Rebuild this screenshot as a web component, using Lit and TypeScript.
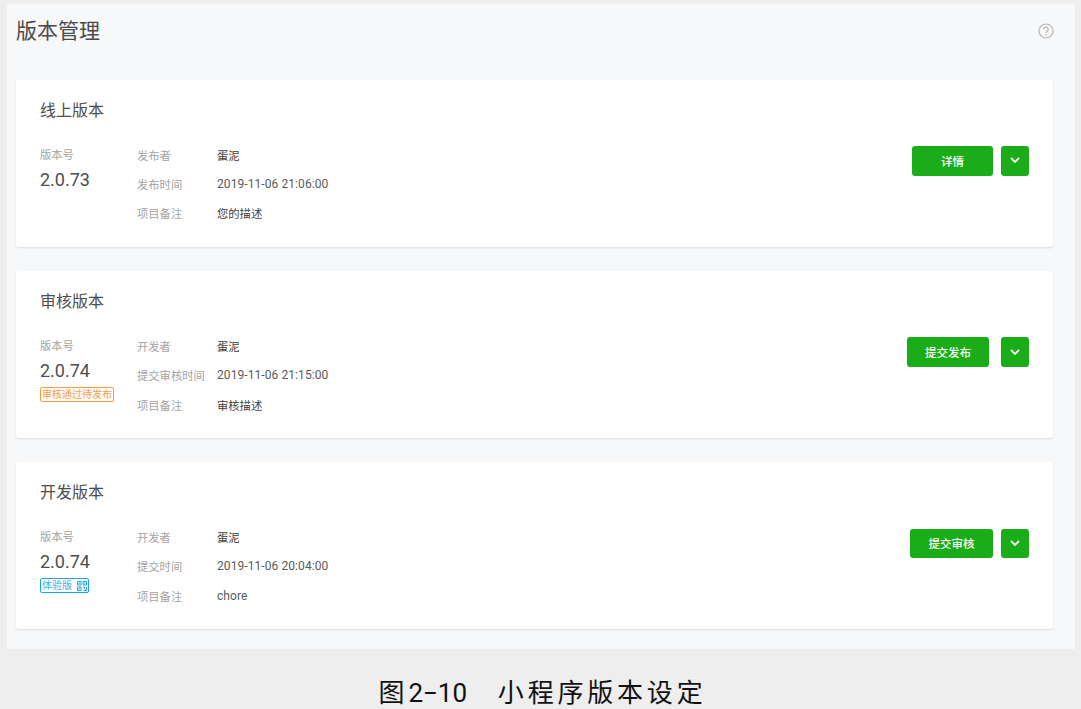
import { LitElement, css, html, nothing } from 'lit';
import { customElement } from 'lit/decorators.js';

interface VersionCard {
  title: string;
  version: string;
  rows: [string, string][];
  action: string;
  actionClass: string;
  tag?: 'audit' | 'trial';
}

const CARDS: VersionCard[] = [
  {
    title: '线上版本',
    version: '2.0.73',
    rows: [
      ['发布者', '蛋泥'],
      ['发布时间', '2019-11-06 21:06:00'],
      ['项目备注', '您的描述'],
    ],
    action: '详情',
    actionClass: 'online',
  },
  {
    title: '审核版本',
    version: '2.0.74',
    rows: [
      ['开发者', '蛋泥'],
      ['提交审核时间', '2019-11-06 21:15:00'],
      ['项目备注', '审核描述'],
    ],
    action: '提交发布',
    actionClass: 'audit',
    tag: 'audit',
  },
  {
    title: '开发版本',
    version: '2.0.74',
    rows: [
      ['开发者', '蛋泥'],
      ['提交时间', '2019-11-06 20:04:00'],
      ['项目备注', 'chore'],
    ],
    action: '提交审核',
    actionClass: 'dev',
    tag: 'trial',
  },
];

const isLatin = (text: string) => /^[\x00-\x7f]+$/.test(text);

@customElement('app-root')
export class AppRoot extends LitElement {
  static styles = css`
    :host {
      display: block;
      box-sizing: border-box;
      width: 1081px;
      height: 709px;
      padding-top: 4px;
      overflow: hidden;
      background: #eeeeee;
      font-family: Roboto, 'Noto Sans CJK SC', sans-serif;
      color: #353535;
    }
    .panel {
      box-sizing: border-box;
      width: 1068px;
      height: 645px;
      margin-left: 7px;
      padding: 0 22px 0 9px;
      background: #f7f8fa;
    }
    .head {
      display: flex;
      align-items: center;
      justify-content: space-between;
      height: 76px;
      padding-bottom: 22px;
      box-sizing: border-box;
    }
    .head h1 {
      margin: 0;
      font-size: 21px;
      font-weight: 400;
      line-height: 54px;
      color: #4a4a4a;
    }
    .help {
      width: 16px;
      height: 16px;
      margin-right: -1px;
      display: block;
    }
    .card {
      box-sizing: border-box;
      height: 166.6px;
      margin-bottom: 24.6px;
      padding: 20px 24px 0;
      background: #fff;
      border-radius: 3px;
      box-shadow: 0 1px 2px rgba(0, 0, 0, 0.12);
    }
    .card h2 {
      margin: 0 0 20px;
      font-size: 16px;
      font-weight: 400;
      line-height: 21px;
      color: #4d4d4d;
    }
    .body {
      display: flex;
      align-items: flex-start;
    }
    .version {
      width: 97px;
      flex: none;
    }
    .label {
      font-size: 11.3px;
      line-height: 29px;
      color: #a3a3a3;
    }
    .number {
      font-size: 18px;
      line-height: 22px;
      margin-top: -1px;
      color: #4d4d4d;
    }
    .tag {
      display: inline-flex;
      align-items: center;
      box-sizing: border-box;
      height: 15px;
      margin-top: 5px;
      padding: 0 1px;
      border: 1px solid;
      border-radius: 2px;
      font-size: 10px;
      line-height: 13px;
    }
    .tag.audit {
      color: #f79b43;
      border-color: #f79b43;
    }
    .tag.trial {
      color: #3cb4e8;
      border-color: #1ea5e6;
    }
    .tag svg {
      width: 10px;
      height: 10px;
      margin-left: 5px;
      display: block;
    }
    .rows {
      flex: 1;
      display: grid;
      grid-template-columns: 80px 1fr;
      grid-auto-rows: 29.25px;
      align-items: center;
      margin-top: -0.8px;
      font-size: 11.3px;
    }
    .rows .key {
      color: #a3a3a3;
    }
    .rows .val {
      color: #3d3d3d;
    }
    .rows .val.latin {
      font-size: 12px;
      letter-spacing: 0.08px;
      color: #5a5a5a;
    }
    .actions {
      display: flex;
      margin-top: 5.2px;
    }
    button {
      height: 29.4px;
      padding: 0;
      border: 0;
      border-radius: 3px;
      background: #1aad19;
      color: #fff;
      font: inherit;
      font-size: 11.5px;
      font-weight: 500;
    }
    .main {
      width: 82px;
      margin-right: 8px;
    }
    .main.online {
      width: 81px;
    }
    .main.dev {
      width: 83px;
    }
    .main.audit {
      margin-right: 12px;
    }
    .more {
      width: 28px;
      display: flex;
      align-items: center;
      justify-content: center;
    }
    .more svg {
      width: 10px;
      height: 7px;
      display: block;
    }
    .caption {
      height: 60px;
      box-sizing: border-box;
      padding: 27px 0 0 4px;
      font-size: 26px;
      line-height: 34px;
      letter-spacing: 3.8px;
      color: #111;
      text-align: center;
      white-space: pre;
    }
    .caption .fig {
      letter-spacing: 0;
    }
  `;

  private renderTag(tag: VersionCard['tag']) {
    if (tag === 'audit') return html`<div class="tag audit">审核通过待发布</div>`;
    if (tag === 'trial') {
      return html`<div class="tag trial">
        体验版
        <svg viewBox="0 0 10 10" fill="none" stroke="#1ea5e6" stroke-width="1">
          <path d="M.5.5h3.5v3.5h-3.5zM6 .5h3.5v3.5h-3.5zM.5 6h3.5v3.5h-3.5zM6 6h1.5v1.5M9.5 6v3.5h-3" />
          <path d="M1.5 2.2h1.5M7 2.2h1.5M1.5 7.7h1.5M8 7.5v.8" />
        </svg>
      </div>`;
    }
    return nothing;
  }

  private renderCard(card: VersionCard) {
    return html`
      <section class="card">
        <h2>${card.title}</h2>
        <div class="body">
          <div class="version">
            <div class="label">版本号</div>
            <div class="number">${card.version}</div>
            ${this.renderTag(card.tag)}
          </div>
          <div class="rows">
            ${card.rows.map(
              ([key, val]) =>
                html`<div class="key">${key}</div>
                  <div class="val ${isLatin(val) ? 'latin' : ''}">${val}</div>`
            )}
          </div>
          <div class="actions">
            <button class="main ${card.actionClass}">${card.action}</button>
            <button class="more">
              <svg viewBox="0 0 10 7" fill="none" stroke="#fff" stroke-width="1.8">
                <path d="M1 1l4 4 4-4" />
              </svg>
            </button>
          </div>
        </div>
      </section>
    `;
  }

  render() {
    return html`
      <div class="panel">
        <header class="head">
          <h1>版本管理</h1>
          <svg class="help" viewBox="0 0 16 16" fill="none" stroke="#b4b4b4" stroke-width="1.2">
            <circle cx="8" cy="8" r="7" />
            <path d="M5.8 6.3a2.2 2.2 0 1 1 3.4 1.8c-.8.5-1.2 1-1.2 1.9" />
            <path d="M8 11.2v1.2" />
          </svg>
        </header>
        ${CARDS.map((card) => this.renderCard(card))}
      </div>
      <div class="caption">图<span class="fig">2−10</span>   小程序版本设定</div>
    `;
  }
}

declare global {
  interface HTMLElementTagNameMap {
    'app-root': AppRoot;
  }
}
